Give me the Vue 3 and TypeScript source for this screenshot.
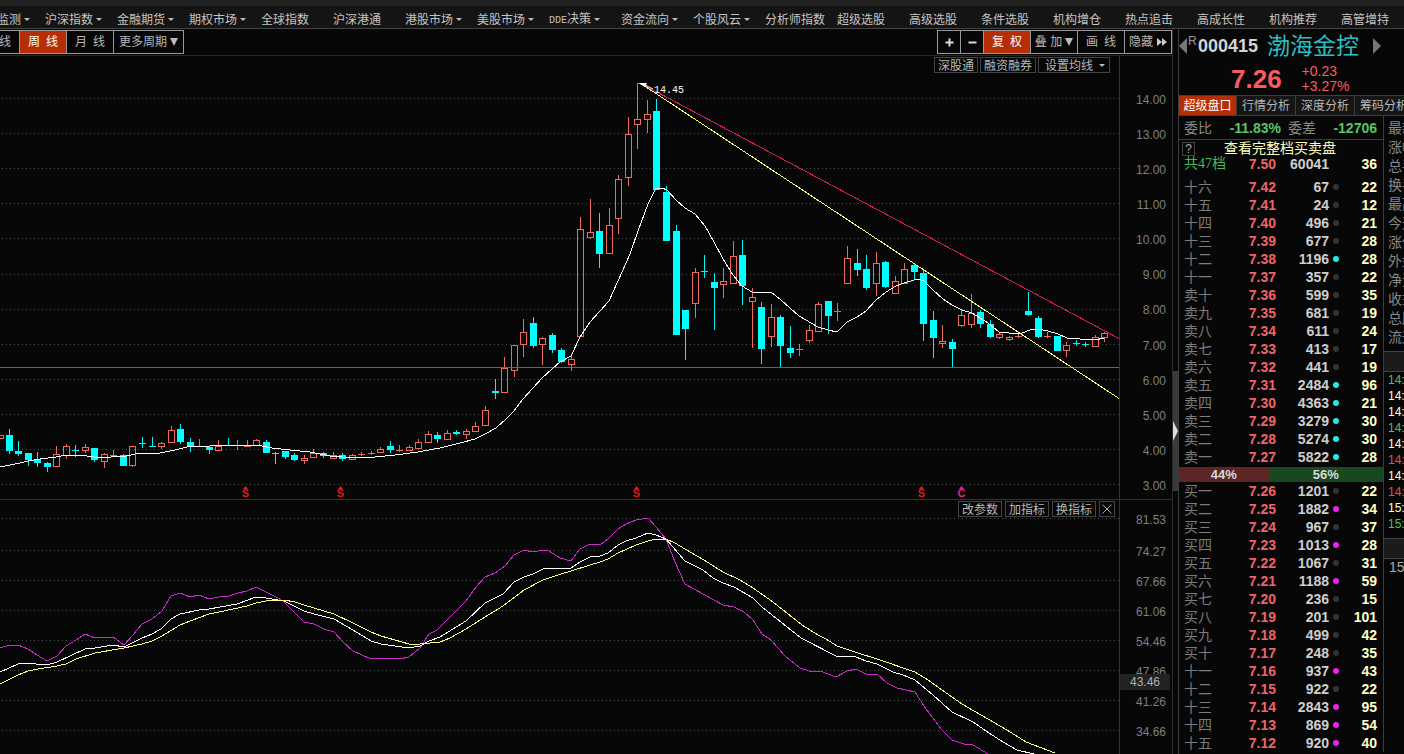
<script setup lang="ts">
interface MenuItem { label: string; latin?: string; drop?: boolean }
interface Level { name: string; price: string; qty: number; mark: '' | 'sell' | 'buy'; count: number }
// x centre, high, body top, body bottom, low, kind (u = rising, d = falling)
type Candle = [number, number, number, number, number, 'u' | 'd']

const menu: MenuItem[] = [
  { label: '期权监测', drop: true },
  { label: '沪深指数', drop: true },
  { label: '金融期货', drop: true },
  { label: '期权市场', drop: true },
  { label: '全球指数' },
  { label: '沪深港通' },
  { label: '港股市场', drop: true },
  { label: '美股市场', drop: true },
  { latin: 'DDE', label: '决策', drop: true },
  { label: '资金流向', drop: true },
  { label: '个股风云', drop: true },
  { label: '分析师指数' },
  { label: '超级选股' },
  { label: '高级选股' },
  { label: '条件选股' },
  { label: '机构增仓' },
  { label: '热点追击' },
  { label: '高成长性' },
  { label: '机构推荐' },
  { label: '高管增持' },
]

const priceGrid = [98, 133, 168, 203, 238, 274, 309, 344, 379, 414, 449, 484]
const priceLabels = ['14.00', '13.00', '12.00', '11.00', '10.00', '9.00', '8.00', '7.00', '6.00', '5.00', '4.00', '3.00']
const indicatorGrid = [518, 550, 580, 610, 640, 670, 700, 730]
const indicatorLabels = ['81.53', '74.27', '67.66', '61.06', '54.46', '47.86', '41.26', '34.66']

const candles: Candle[] = [
  [0, 435, 435, 438, 439, 'u'], [9, 429, 435, 451, 454, 'd'], [18, 441, 451, 454, 456, 'd'],
  [28, 453, 453, 460, 466, 'd'], [37, 452, 459, 463, 467, 'd'], [47, 462, 463, 467, 472, 'd'],
  [56, 446, 454, 466, 467, 'u'], [66, 444, 446, 455, 459, 'u'], [75, 445, 450, 451, 457, 'd'],
  [85, 444, 447, 450, 453, 'u'], [94, 448, 448, 460, 462, 'd'], [104, 453, 454, 461, 468, 'u'],
  [113, 450, 455, 456, 457, 'u'], [123, 454, 455, 466, 466, 'd'], [132, 446, 446, 465, 467, 'u'],
  [142, 437, 443, 444, 448, 'd'], [152, 437, 446, 447, 447, 'd'], [161, 442, 443, 446, 449, 'u'],
  [171, 426, 430, 442, 443, 'u'], [180, 424, 429, 442, 444, 'd'], [190, 438, 442, 447, 452, 'd'],
  [199, 439, 446, 447, 447, 'u'], [209, 446, 447, 450, 454, 'd'], [218, 440, 446, 450, 451, 'u'],
  [228, 438, 445, 446, 446, 'd'], [237, 440, 445, 446, 450, 'u'], [247, 440, 446, 447, 447, 'u'],
  [256, 439, 440, 445, 446, 'u'], [266, 440, 442, 453, 453, 'd'], [275, 452, 453, 454, 464, 'd'],
  [285, 451, 451, 457, 459, 'd'], [294, 453, 455, 460, 461, 'd'], [304, 455, 458, 460, 464, 'u'],
  [313, 449, 453, 457, 458, 'u'], [323, 452, 453, 456, 458, 'd'], [333, 452, 455, 458, 459, 'u'],
  [342, 453, 455, 459, 461, 'd'], [352, 454, 455, 459, 460, 'u'], [361, 452, 454, 455, 456, 'u'],
  [371, 451, 453, 454, 455, 'u'], [380, 447, 449, 452, 453, 'u'], [390, 441, 446, 450, 453, 'd'],
  [399, 445, 450, 451, 452, 'u'], [409, 445, 447, 450, 451, 'u'], [418, 439, 442, 448, 449, 'u'],
  [428, 431, 434, 442, 443, 'u'], [437, 432, 435, 439, 443, 'd'], [447, 430, 433, 439, 440, 'u'],
  [456, 430, 432, 434, 435, 'd'], [466, 429, 431, 434, 439, 'u'], [475, 422, 426, 431, 432, 'u'],
  [485, 406, 410, 425, 426, 'u'], [495, 379, 391, 393, 399, 'd'], [504, 357, 368, 392, 393, 'u'],
  [514, 345, 345, 370, 377, 'u'], [523, 319, 332, 344, 357, 'u'], [533, 317, 323, 346, 348, 'd'],
  [542, 337, 338, 344, 365, 'u'], [552, 333, 335, 350, 353, 'd'], [561, 348, 350, 362, 363, 'd'],
  [571, 356, 359, 364, 371, 'u'], [580, 217, 229, 336, 337, 'u'], [590, 199, 232, 237, 239, 'u'],
  [599, 213, 231, 254, 268, 'd'], [609, 208, 225, 253, 254, 'u'], [618, 175, 179, 218, 234, 'u'],
  [628, 117, 134, 177, 186, 'u'], [637, 83, 119, 124, 149, 'u'], [647, 100, 114, 119, 133, 'u'],
  [656, 99, 111, 190, 190, 'd'], [666, 186, 192, 241, 241, 'd'], [676, 225, 231, 335, 335, 'd'],
  [685, 310, 310, 329, 360, 'd'], [695, 268, 272, 303, 318, 'u'], [704, 255, 271, 272, 278, 'd'],
  [714, 273, 282, 288, 330, 'd'], [723, 268, 281, 284, 298, 'u'], [733, 241, 256, 283, 284, 'u'],
  [742, 240, 255, 286, 305, 'd'], [752, 288, 297, 301, 348, 'u'], [761, 302, 307, 349, 364, 'd'],
  [771, 304, 317, 336, 347, 'u'], [780, 315, 317, 346, 367, 'd'], [790, 326, 348, 353, 358, 'd'],
  [799, 344, 349, 350, 356, 'u'], [809, 325, 330, 340, 343, 'u'], [818, 302, 304, 331, 332, 'u'],
  [828, 301, 301, 316, 334, 'd'], [837, 303, 311, 312, 321, 'u'], [847, 246, 258, 283, 284, 'u'],
  [857, 249, 263, 270, 276, 'd'], [866, 255, 269, 288, 290, 'd'], [876, 252, 263, 283, 296, 'u'],
  [885, 261, 262, 287, 288, 'd'], [895, 276, 281, 293, 294, 'u'], [904, 263, 269, 283, 284, 'u'],
  [914, 264, 265, 272, 280, 'd'], [923, 269, 273, 324, 341, 'd'], [933, 311, 320, 338, 358, 'd'],
  [942, 325, 341, 343, 348, 'u'], [952, 339, 342, 349, 367, 'd'], [961, 310, 315, 325, 327, 'u'],
  [971, 294, 313, 324, 328, 'u'], [980, 310, 312, 324, 328, 'd'], [990, 320, 324, 337, 338, 'd'],
  [999, 332, 334, 337, 339, 'u'], [1009, 336, 337, 339, 341, 'u'], [1018, 333, 336, 337, 338, 'u'],
  [1028, 292, 311, 315, 316, 'd'], [1038, 316, 318, 337, 338, 'd'], [1047, 332, 336, 337, 338, 'u'],
  [1057, 336, 336, 351, 351, 'd'], [1066, 342, 345, 350, 357, 'u'], [1076, 340, 343, 344, 346, 'd'],
  [1085, 342, 344, 345, 347, 'd'], [1095, 335, 337, 346, 347, 'u'], [1104, 332, 333, 337, 342, 'u'],
]

// A body only one pixel tall is a doji and is drawn as a single stroke.
const isFlat = (c: Candle): boolean => c[3] - c[2] <= 1

const average = '0,467 10,465 20,463 28,461 40,459 56,457 66,455 80,455 94,457 107,458 115,456 122,457 135,454 142,453 160,453 175,450 187,447 200,446 210,446 240,445 262,446 272,448 290,450 310,452 330,456 342,457 375,457 395,455 418,452 440,448 460,443 475,439 485,434 496,428 506,419 514,411 523,399 533,388 542,378 552,369 560,362 571,356 580,337 590,322 609,301 622,272 630,254 638,231 648,204 656,188 662,188 667,190 676,200 685,208 695,214 705,226 714,242 723,259 733,275 742,286 752,292 760,293 771,292 781,300 799,316 818,327 828,330 837,332 847,322 857,317 866,311 876,300 886,292 896,286 904,283 914,280 918,279 924,281 933,290 943,299 952,305 962,310 972,313 980,318 988,323 999,332 1009,333 1022,333 1030,330 1038,329 1048,331 1058,334 1067,338 1080,339 1095,340 1104,338'

const fastLine = '0,648 10,645 18,645 28,649 37,655 47,661 57,656 66,646 76,640 85,634 95,638 104,637 113,637 124,645 133,635 142,624 152,619 162,611 171,596 180,593 190,597 199,595 209,599 219,597 229,596 238,593 247,591 256,587 266,592 276,597 283,601 295,613 304,622 314,624 324,629 334,632 343,642 353,651 371,659 385,658 400,659 409,657 420,648 429,634 437,630 447,620 466,601 476,587 485,577 495,573 505,566 514,555 524,550 533,552 543,550 549,551 560,558 571,561 580,549 590,544 600,545 609,538 618,529 626,524 636,520 648,518 656,527 666,539 675,562 685,584 703,594 723,605 734,607 744,612 753,620 762,634 771,640 785,656 800,668 809,671 820,671 836,677 847,671 856,669 866,674 877,674 887,683 897,688 915,692 926,709 942,730 952,740 964,744 973,745 988,754'
const midLine = '0,672 18,664 25,663 47,665 57,662 85,649 95,648 113,645 124,647 142,638 152,634 161,629 171,619 180,614 199,610 209,609 237,604 256,597 266,598 284,601 304,611 314,614 334,619 353,630 371,641 381,644 409,648 420,646 429,641 440,637 466,621 485,603 503,594 514,582 524,577 533,574 543,569 552,568 571,568 580,562 590,557 600,556 608,553 618,545 626,541 636,538 648,533 656,535 666,539 685,561 703,570 713,578 723,583 734,587 753,598 762,607 801,638 836,656 856,657 866,661 877,664 893,672 903,675 915,680 933,695 952,712 973,722 989,733 1003,742 1017,750 1034,754'
const slowLine = '0,684 18,675 28,671 38,669 57,666 66,664 76,659 95,653 124,648 142,644 152,641 162,636 180,625 190,621 209,614 219,612 247,606 256,603 266,601 284,600 295,602 304,605 314,608 334,614 353,623 371,632 381,636 409,644 420,644 440,642 450,638 466,629 485,617 503,606 524,590 543,580 561,574 571,571 590,565 600,562 608,559 618,553 636,545 648,541 656,539 666,539 675,543 685,549 704,560 723,572 740,580 753,588 773,602 802,625 818,635 826,639 837,646 858,653 877,659 915,672 928,680 942,690 962,704 981,715 1007,730 1026,742 1055,753'

const markers = [
  { x: 245, text: 'S', kind: 'split' },
  { x: 340, text: 'S', kind: 'split' },
  { x: 636, text: 'S', kind: 'split' },
  { x: 921, text: 'S', kind: 'split' },
  { x: 961, text: 'C', kind: 'capital' },
]

const level = (name: string, price: string, qty: number, mark: Level['mark'], count: number): Level => ({ name, price, qty, mark, count })

const asks: Level[] = [
  level('十六', '7.42', 67, '', 22),
  level('十五', '7.41', 24, '', 12),
  level('十四', '7.40', 496, '', 21),
  level('十三', '7.39', 677, '', 28),
  level('十二', '7.38', 1196, 'sell', 28),
  level('十一', '7.37', 357, '', 22),
  level('卖十', '7.36', 599, '', 35),
  level('卖九', '7.35', 681, '', 19),
  level('卖八', '7.34', 611, '', 24),
  level('卖七', '7.33', 413, '', 17),
  level('卖六', '7.32', 441, '', 19),
  level('卖五', '7.31', 2484, 'sell', 96),
  level('卖四', '7.30', 4363, 'sell', 21),
  level('卖三', '7.29', 3279, 'sell', 30),
  level('卖二', '7.28', 5274, 'sell', 30),
  level('卖一', '7.27', 5822, 'sell', 28),
]
const bids: Level[] = [
  level('买一', '7.26', 1201, '', 22),
  level('买二', '7.25', 1882, 'buy', 34),
  level('买三', '7.24', 967, '', 37),
  level('买四', '7.23', 1013, 'buy', 28),
  level('买五', '7.22', 1067, '', 31),
  level('买六', '7.21', 1188, 'buy', 59),
  level('买七', '7.20', 236, '', 15),
  level('买八', '7.19', 201, '', 101),
  level('买九', '7.18', 499, '', 42),
  level('买十', '7.17', 248, '', 35),
  level('十一', '7.16', 937, 'buy', 43),
  level('十二', '7.15', 922, '', 22),
  level('十三', '7.14', 2843, 'buy', 95),
  level('十四', '7.13', 869, 'buy', 54),
  level('十五', '7.12', 920, 'buy', 40),
]

const sellShare = 44
const facts = ['最新', '涨幅', '总手', '换手', '最高', '今开', '涨停', '外盘', '净资', '收益', '总股', '流通']
const ticks = [
  { time: '14:', tone: 'down' }, { time: '14:', tone: 'flat' }, { time: '14:', tone: 'flat' },
  { time: '14:', tone: 'down' }, { time: '14:', tone: 'flat' }, { time: '14:', tone: 'up' },
  { time: '14:', tone: 'flat' }, { time: '14:', tone: 'up' }, { time: '15:', tone: 'flat' },
  { time: '15:', tone: 'down' },
]
</script>

<template>
  <div class="app">
    <nav class="menu">
      <a v-for="item in menu" :key="item.label" href="#" class="menu-item">
        <span><span v-if="item.latin" class="latin">{{ item.latin }}</span>{{ item.label }}</span><i v-if="item.drop" class="caret"></i>
      </a>
    </nav>

    <div class="body">
      <main class="left">
        <div class="toolbar">
          <div class="group periods">
            <button type="button" class="tool day">日 线</button>
            <button type="button" class="tool w47 spaced active"><span>周</span><span>线</span></button>
            <button type="button" class="tool w47 spaced"><span>月</span><span>线</span></button>
            <button type="button" class="tool more">更多周期<i class="drop"></i></button>
          </div>
          <div class="group actions">
            <button type="button" class="tool w23" aria-label="放大">
              <svg width="9" height="9" viewBox="0 0 9 9"><path d="M4.5 0.5V8.5M0.5 4.5H8.5" stroke="#ddd" stroke-width="2" /></svg>
            </button>
            <button type="button" class="tool w23" aria-label="缩小">
              <svg width="9" height="9" viewBox="0 0 9 9"><path d="M0.5 4.5H8.5" stroke="#ddd" stroke-width="2" /></svg>
            </button>
            <button type="button" class="tool w47 spaced active"><span>复</span><span>权</span></button>
            <button type="button" class="tool w47">叠 加<i class="drop"></i></button>
            <button type="button" class="tool w47 spaced"><span>画</span><span>线</span></button>
            <button type="button" class="tool w46">隐藏<svg class="ff" width="10" height="8" viewBox="0 0 10 8"><path d="M0 0L5 4L0 8ZM5 0L10 4L5 8Z" fill="#ccc" /></svg></button>
          </div>
        </div>

        <section class="pane">
          <div class="plot price-plot">
            <svg class="canvas">
              <g transform="translate(0 -56)" shape-rendering="crispEdges">
                <line v-for="y in priceGrid" :key="y" class="grid" x1="2" :y1="y + 0.5" x2="100%" :y2="y + 0.5" />
                <g v-for="c in candles" :key="c[0]" :class="c[5] === 'u' ? 'rise' : 'fall'">
                  <template v-if="isFlat(c)">
                    <line :x1="c[0] + 0.5" :x2="c[0] + 0.5" :y1="c[1]" :y2="c[4]" />
                    <line :x1="c[0] - 3" :x2="c[0] + 4" :y1="c[2] + 0.5" :y2="c[2] + 0.5" />
                  </template>
                  <template v-else>
                    <line :x1="c[0] + 0.5" :x2="c[0] + 0.5" :y1="c[1]" :y2="c[2]" />
                    <line :x1="c[0] + 0.5" :x2="c[0] + 0.5" :y1="c[3]" :y2="c[4]" />
                    <rect v-if="c[5] === 'u'" :x="c[0] - 2.5" :y="c[2] + 0.5" width="6" :height="c[3] - c[2]" />
                    <rect v-else class="solid" :x="c[0] - 3" :y="c[2]" width="7" :height="c[3] - c[2]" />
                  </template>
                </g>
                <rect class="support" x="0" y="367" width="100%" height="1" />
                <line class="trend-pink" x1="640" y1="83" x2="1119" y2="338.5" />
                <line class="trend-yellow" x1="640" y1="83" x2="1119" y2="398.5" />
                <polyline class="white-line" :points="average" />
              </g>
              <g transform="translate(0 -56)">
                <path d="M638 83L647 83L645 87Z" fill="#fff" />
                <path d="M645 85L653 89" stroke="#fff" />
                <text class="peak" x="654" y="93">14.45</text>
                <g v-for="m in markers" :key="m.x" :class="m.kind">
                  <path :d="`M${m.x - 2} 489L${m.x + 0.5} 486L${m.x + 3} 489Z`" />
                  <text :x="m.x + 0.5" y="497" text-anchor="middle">{{ m.text }}</text>
                </g>
              </g>
            </svg>
            <div class="tags">
              <button type="button" class="tag">深股通</button>
              <button type="button" class="tag">融资融券</button>
              <button type="button" class="tag wide">设置均线<i class="caret"></i></button>
            </div>
          </div>
          <div class="axis price-axis">
            <span v-for="p in priceLabels" :key="p">{{ p }}</span>
          </div>
        </section>

        <section class="pane lower">
          <div class="plot indicator-plot">
            <svg class="canvas">
              <g transform="translate(0 -500)" shape-rendering="crispEdges">
                <line v-for="y in indicatorGrid" :key="y" class="grid" x1="2" :y1="y + 0.5" x2="100%" :y2="y + 0.5" />
                <polyline class="magenta-line" :points="fastLine" />
                <polyline class="white-line" :points="midLine" />
                <polyline class="yellow-line" :points="slowLine" />
              </g>
            </svg>
            <div class="tags indicator-tags">
              <button type="button" class="tag">改参数</button>
              <button type="button" class="tag">加指标</button>
              <button type="button" class="tag">换指标</button>
              <button type="button" class="tag close" aria-label="关闭">
                <svg width="10" height="10" viewBox="0 0 10 10"><path d="M0.5 0.5L9.5 9.5M9.5 0.5L0.5 9.5" stroke="#aaa" /></svg>
              </button>
            </div>
          </div>
          <div class="axis indicator-axis">
            <span v-for="p in indicatorLabels" :key="p">{{ p }}</span>
            <b class="cursor-value">43.46</b>
          </div>
        </section>
      </main>

      <div class="splitter">
        <div class="thumb">
          <svg width="5" height="20" viewBox="0 0 5 20"><path d="M0 0L5 10L0 20Z" fill="#ddd" /></svg>
        </div>
      </div>

      <aside class="right">
        <header class="quote">
          <div class="title">
            <button type="button" class="step" aria-label="上一只">
              <svg width="8" height="16" viewBox="0 0 8 16"><path d="M8 0V16L0 8Z" fill="#777" /></svg>
            </button>
            <sup class="flag">R</sup>
            <strong class="code">000415</strong>
            <span class="name">渤海金控</span>
            <button type="button" class="step" aria-label="下一只">
              <svg width="8" height="16" viewBox="0 0 8 16"><path d="M0 0V16L8 8Z" fill="#777" /></svg>
            </button>
          </div>
          <div class="last">
            <strong class="price">7.26</strong>
            <div class="change"><span>+0.23</span><span>+3.27%</span></div>
          </div>
        </header>
        <div class="tabs">
          <button type="button" class="tab on">超级盘口</button>
          <button type="button" class="tab">行情分析</button>
          <button type="button" class="tab">深度分析</button>
          <button type="button" class="tab">筹码分析</button>
        </div>
        <div class="columns">
          <div class="book">
            <div class="ratio">
              <span>委比</span><b>-11.83%</b><span class="second">委差</span><b class="diff">-12706</b>
            </div>
            <div class="full">
              <button type="button" class="help">?</button>
              <a href="#">查看完整档买卖盘</a>
            </div>
            <table>
              <tbody>
                <tr class="summary">
                  <th scope="row">共47档</th><td class="p">7.50</td><td class="q">60041</td><td></td><td class="n">36</td>
                </tr>
                <tr v-for="l in asks" :key="l.price">
                  <th scope="row">{{ l.name }}</th><td class="p">{{ l.price }}</td><td class="q">{{ l.qty }}</td>
                  <td class="m"><i class="dot" :class="l.mark"></i></td><td class="n">{{ l.count }}</td>
                </tr>
              </tbody>
            </table>
            <div class="share">
              <div class="sell" :style="{ width: sellShare + '%' }">{{ sellShare }}%</div>
              <div class="buy">{{ 100 - sellShare }}%</div>
            </div>
            <table>
              <tbody>
                <tr v-for="l in bids" :key="l.price">
                  <th scope="row">{{ l.name }}</th><td class="p">{{ l.price }}</td><td class="q">{{ l.qty }}</td>
                  <td class="m"><i class="dot" :class="l.mark"></i></td><td class="n">{{ l.count }}</td>
                </tr>
              </tbody>
            </table>
          </div>
          <div class="side">
            <ul class="facts"><li v-for="(f, i) in facts" :key="i">{{ f }}</li></ul>
            <div class="band"></div>
            <ul class="ticks"><li v-for="(t, i) in ticks" :key="i" :class="t.tone">{{ t.time }}</li></ul>
            <div class="band"></div>
            <div class="clock">15:</div>
          </div>
        </div>
      </aside>
    </div>
  </div>
</template>

<style>
body {
  background: #070707;
}
</style>

<style scoped>
.app {
  display: flex;
  flex-direction: column;
  height: 100vh;
  overflow: hidden;
  box-sizing: border-box;
  border-top: 6px solid #222;
  background: #070707;
  color: #b8b8b8;
  font-family: "Liberation Sans", "Noto Sans CJK SC", sans-serif;
  font-size: 12px;
  line-height: 14px;
}
button {
  margin: 0;
  padding: 0;
  border: 0;
  background: none;
  color: inherit;
  font: inherit;
  white-space: nowrap;
}
a {
  color: inherit;
  text-decoration: none;
}
ul {
  margin: 0;
  padding: 0;
  list-style: none;
}
.menu {
  display: flex;
  flex: none;
  height: 22px;
  margin-left: -27px;
  border-bottom: 1px solid #444;
  background: #141414;
  color: #c4c4c4;
}
.menu-item {
  display: flex;
  flex: none;
  align-items: center;
  gap: 3px;
  width: 72px;
  padding-top: 5px;
  white-space: nowrap;
}
.latin {
  font-family: "Liberation Mono", monospace;
  font-size: 10px;
}
.caret {
  border: 3px solid transparent;
  border-top-color: #bbb;
  border-bottom: 0;
}
.drop {
  display: inline-block;
  margin-left: 3px;
  border: 4px solid transparent;
  border-top: 8px solid #bbb;
  border-bottom: 0;
}
.body {
  display: flex;
  flex: 1;
  min-height: 0;
}
.left {
  flex: 1;
  min-width: 0;
  border-right: 1px solid #2c2c2c;
}
.toolbar {
  display: flex;
  justify-content: space-between;
  align-items: center;
  height: 26px;
  border-bottom: 1px solid #262626;
}
.group {
  display: flex;
  height: 24px;
  box-sizing: border-box;
  border: 1px solid #999;
}
.periods {
  border-left: 0;
}
.tool {
  display: flex;
  align-items: center;
  justify-content: center;
  box-sizing: border-box;
  white-space: pre;
  border-right: 1px solid #999;
}
.tool:last-child {
  border-right: 0;
}
.spaced {
  gap: 6px;
}
.day {
  width: 20px;
  justify-content: flex-end;
  padding-right: 8px;
  overflow: hidden;
}
.more {
  width: 69px;
}
.w23 {
  width: 23px;
}
.w46 {
  width: 46px;
}
.w47 {
  width: 47px;
}
.active {
  background: #b52e05;
  color: #fff;
}
.ff {
  margin-left: 4px;
}
.pane {
  display: flex;
}
.lower {
  border-top: 1px solid #333;
}
.plot {
  position: relative;
  flex: 1;
  min-width: 0;
}
.price-plot {
  height: 443px;
}
.indicator-plot {
  height: 254px;
}
.canvas {
  display: block;
  width: 100%;
  height: 100%;
  fill: none;
}
.grid {
  stroke: #4c4c4c;
  stroke-dasharray: 1 3;
}
.rise line,
.rise rect {
  stroke: #ee6a60;
}
.fall line {
  stroke: #00f6f6;
}
.solid {
  fill: #00ffff;
}
.support {
  fill: #d8286e;
}
.trend-pink {
  stroke: #d81b60;
}
.trend-yellow,
.yellow-line {
  stroke: #ffff84;
}
.white-line {
  stroke: #fff;
}
.magenta-line {
  stroke: #c92cc9;
}
.peak {
  fill: #fff;
  font-family: "Liberation Mono", monospace;
  font-size: 10px;
}
.split,
.capital {
  fill: #d81e1e;
  font-size: 11px;
  font-weight: bold;
}
.capital {
  fill: #e81e9a;
}
.tags {
  position: absolute;
  top: 1px;
  right: 9px;
  display: flex;
  gap: 2px;
}
.indicator-tags {
  right: 4px;
  gap: 3px;
}
.tag {
  display: flex;
  align-items: center;
  justify-content: center;
  height: 16px;
  padding: 1px 3px 0;
  border: 1px solid #444;
  background: #070707;
  box-sizing: border-box;
}
.wide {
  gap: 6px;
  padding: 1px 4px 0 6px;
}
.close {
  width: 16px;
  padding: 0;
}
.axis {
  position: relative;
  width: 53px;
  box-sizing: border-box;
  padding-right: 6px;
  border-left: 1px solid #333;
  color: #7f7f7f;
  text-align: right;
}
.price-axis {
  display: flex;
  flex-direction: column;
  justify-content: space-between;
  padding-top: 37px;
  padding-bottom: 6px;
}
.indicator-axis {
  display: grid;
  grid-template-rows: 32px repeat(7, 30px);
  padding-top: 13px;
}
.cursor-value {
  position: absolute;
  top: 174px;
  left: 0;
  width: 50px;
  padding-right: 10px;
  box-sizing: border-box;
  background: #222;
  color: #b0b0b0;
  font-weight: normal;
  line-height: 16px;
}
.splitter {
  display: flex;
  flex: none;
  width: 5px;
}
.thumb {
  display: flex;
  align-items: center;
  width: 100%;
  height: 120px;
  margin-top: 342px;
  background: #3a3a3a;
}
.right {
  display: flex;
  flex: none;
  flex-direction: column;
  width: 225px;
  overflow: hidden;
  border-left: 1px solid #3c3c3c;
}
.title {
  display: flex;
  align-items: center;
  height: 33px;
}
.step {
  display: flex;
}
.flag {
  width: 11px;
  height: 28px;
  padding-left: 1px;
  box-sizing: border-box;
  color: #999;
  font-size: 12px;
  line-height: 18px;
}
.code {
  color: #d4d4d4;
  font-size: 18px;
}
.name {
  margin: 0 14px 0 9px;
  color: #2cc0c4;
  font-size: 23px;
  line-height: 32px;
}
.last {
  display: flex;
  align-items: center;
  gap: 20px;
  height: 33px;
  padding-left: 52px;
  color: #f85c60;
}
.price {
  font-size: 26px;
  line-height: 30px;
}
.change {
  display: flex;
  flex-direction: column;
  font-size: 14px;
  line-height: 15px;
}
.tabs {
  display: flex;
  flex: none;
  height: 19px;
  border-top: 1px solid #3c3c3c;
  border-bottom: 1px solid #3c3c3c;
  background: #161616;
}
.tab {
  flex: none;
  width: 59px;
  padding-top: 1px;
  box-sizing: border-box;
  border-right: 1px solid #3c3c3c;
}
.tab.on {
  width: 58px;
  background: #b52e05;
  color: #fff;
}
.columns {
  display: flex;
}
.book {
  flex: none;
  width: 204px;
  border-right: 1px solid #3c3c3c;
  font-size: 14px;
}
.ratio {
  display: flex;
  align-items: center;
  height: 23px;
  padding: 0 6px 0 5px;
  border-bottom: 1px solid #3c3c3c;
  color: #888;
}
.ratio b {
  width: 69px;
  color: #58c466;
  text-align: right;
}
.ratio .diff {
  flex: 1;
}
.second {
  margin-left: 7px;
}
.full {
  display: flex;
  align-items: center;
  height: 15px;
  color: #ffffc0;
}
.help {
  width: 13px;
  height: 14px;
  margin: 2px 29px 0 3px;
  box-sizing: border-box;
  border: 1px solid #444;
  color: #aaa;
  font-size: 12px;
  line-height: 12px;
}
table {
  width: 198px;
  margin-left: 5px;
  border-collapse: collapse;
  table-layout: fixed;
}
tr {
  height: 18px;
}
th,
td {
  padding: 0;
  font-weight: bold;
  line-height: 18px;
  text-align: right;
}
th {
  width: 42px;
  color: #7c7c7c;
  font-weight: normal;
  text-align: left;
  white-space: nowrap;
}
.summary th {
  padding-bottom: 5px;
  color: #4ab85a;
  font-family: "Liberation Serif", "Noto Sans CJK SC", serif;
}
.summary td {
  padding-bottom: 5px;
}
.p {
  width: 50px;
  color: #ee6468;
}
.q {
  width: 53px;
  color: #cecece;
}
.m,
.q + td {
  width: 14px;
}
.m {
  text-align: center;
}
.n {
  padding-right: 5px;
  color: #ffffc8;
}
.dot {
  display: block;
  width: 6px;
  height: 6px;
  margin: 0 auto;
  border-radius: 3px;
  background: #333;
}
.dot.sell {
  background: #22eaea;
}
.dot.buy {
  background: #ea22ea;
}
.share {
  display: flex;
  height: 15px;
  margin-top: 1px;
  color: #d8d8d8;
  font-size: 13px;
  font-weight: bold;
  line-height: 16px;
  text-align: center;
}
.share .sell {
  background: #5c2626;
}
.share .buy {
  flex: 1;
  background: #174820;
}
.side {
  flex: 1;
  min-width: 0;
  white-space: nowrap;
}
.facts {
  padding: 3px 0 4px 4px;
  color: #888;
  font-size: 14px;
  line-height: 19px;
}
.band {
  height: 19px;
  border-top: 1px solid #444;
  border-bottom: 1px solid #444;
  background: #1b1b1b;
}
.ticks {
  padding: 0 0 6px 4px;
  line-height: 16px;
}
.up {
  color: #e0524c;
}
.down {
  color: #4cc45c;
}
.flat {
  color: #ffffc8;
}
.clock {
  padding-left: 5px;
  color: #aaa;
  font-size: 14px;
  line-height: 17px;
}
</style>
